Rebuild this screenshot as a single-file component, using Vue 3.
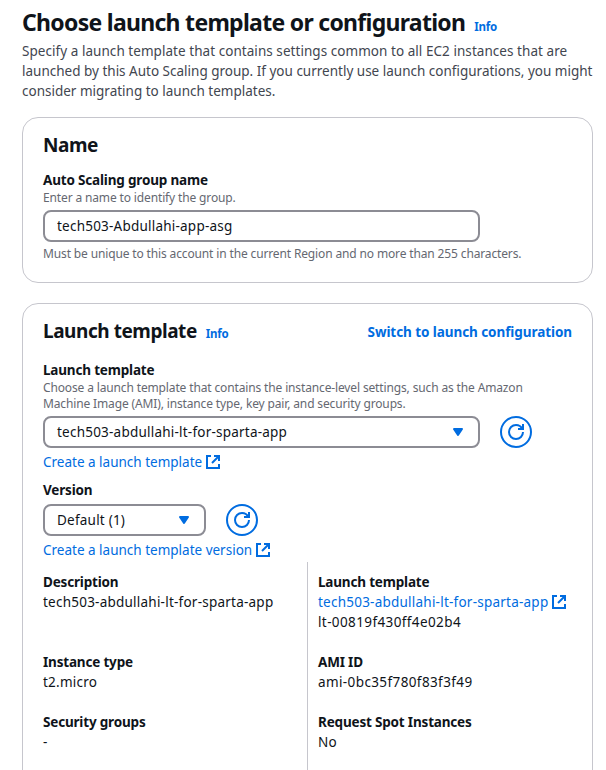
<script setup>
import { ref, h } from 'vue'

const groupName = ref('tech503-Abdullahi-app-asg')

const ExternalIcon = () =>
  h('svg', { width: 16, height: 16, viewBox: '0 0 16 16', fill: 'none', stroke: 'currentColor', 'stroke-width': 2 }, [
    h('path', { d: 'M6 2H2v12h12v-4' }),
    h('path', { d: 'M9 2h5v5' }),
    h('path', { d: 'M7 9l7-7' }),
  ])

const RefreshIcon = () =>
  h('svg', { width: 16, height: 16, viewBox: '0 0 16 16', fill: 'none', stroke: 'currentColor', 'stroke-width': 2 }, [
    h('path', { d: 'M15 8c0 3.900-3.100 7-7 7s-7-3.100-7-7 3.100-7 7-7c2.800 0 5.200 1.600 6.300 4' }),
    h('path', { d: 'M10 5h5V0' }),
  ])

const details = [
  [
    { label: 'Description', value: 'tech503-abdullahi-lt-for-sparta-app' },
    { label: 'Instance type', value: 't2.micro' },
    { label: 'Security groups', value: '-' },
  ],
  [
    { label: 'Launch template', link: 'tech503-abdullahi-lt-for-sparta-app', value: 'lt-00819f430ff4e02b4', id: true },
    { label: 'AMI ID', value: 'ami-0bc35f780f83f3f49', id: true },
    { label: 'Request Spot Instances', value: 'No' },
  ],
]
</script>

<template>
  <main class="page">
    <header class="intro">
      <div class="heading">
        <h1>Choose launch template or configuration</h1>
        <a class="info">Info</a>
      </div>
      <p>
        <span class="loose">Specify a launch template that contains settings common to all EC2 instances that are</span><br />
        launched by this Auto Scaling group. If you currently use launch configurations, you might<br />
        consider migrating to launch templates.
      </p>
    </header>

    <section class="card">
      <h2>Name</h2>
      <div class="field">
        <div class="label">Auto Scaling group name</div>
        <div class="hint">Enter a name to identify the group.</div>
        <input v-model="groupName" class="control wide" type="text" />
        <div class="hint">Must be unique to this account in the current Region and no more than 255 characters.</div>
      </div>
    </section>

    <section class="card tall">
      <div class="card-head">
        <div class="heading">
          <h2>Launch template</h2>
          <a class="info">Info</a>
        </div>
        <a class="switch">Switch to launch configuration</a>
      </div>
      <div class="field">
        <div class="label">Launch template</div>
        <div class="hint">
          Choose a launch template that contains the instance-level settings, such as the Amazon<br />
          Machine Image (AMI), instance type, key pair, and security groups.
        </div>
        <div class="row">
          <div class="control wide select">
            <span>tech503-abdullahi-lt-for-sparta-app</span>
            <svg width="12" height="9" viewBox="0 0 12 9"><path d="M2 1h8L6 7Z" fill="#006ce0" stroke="#006ce0" stroke-width="2" stroke-linejoin="round" /></svg>
          </div>
          <button class="refresh" type="button"><RefreshIcon /></button>
        </div>
        <a class="link"><span>Create a launch template</span><ExternalIcon /></a>
      </div>
      <div class="field second">
        <div class="label">Version</div>
        <div class="row">
          <div class="control narrow select">
            <span>Default (1)</span>
            <svg width="12" height="9" viewBox="0 0 12 9"><path d="M2 1h8L6 7Z" fill="#006ce0" stroke="#006ce0" stroke-width="2" stroke-linejoin="round" /></svg>
          </div>
          <button class="refresh" type="button"><RefreshIcon /></button>
        </div>
        <a class="link"><span>Create a launch template version</span><ExternalIcon /></a>
      </div>

      <div class="details">
        <div v-for="(col, c) in details" :key="c" class="col">
          <div v-for="item in col" :key="item.label">
            <div class="label">{{ item.label }}</div>
            <a v-if="item.link" class="link resource"><span>{{ item.link }}</span><ExternalIcon /></a>
            <div class="value" :class="{ id: item.id }">{{ item.value }}</div>
          </div>
        </div>
      </div>
    </section>
  </main>
</template>

<style>
body {
  margin: 0;
  background: #fff;
}
</style>

<style scoped>
.page {
  box-sizing: border-box;
  width: 606px;
  height: 770px;
  overflow: hidden;
  padding: 7px 13px 0 22px;
  display: flex;
  flex-direction: column;
  font: 13.5px/20px 'Noto Sans', sans-serif;
  color: #0f141a;
  white-space: nowrap;
}
h1,
h2,
p {
  margin: 0;
}
svg {
  display: block;
  flex: none;
}
.heading {
  display: flex;
  align-items: baseline;
}
h1 {
  font-size: 23px;
  line-height: 30px;
  font-weight: 700;
  letter-spacing: -0.71px;
}
h2 {
  font-size: 19px;
  line-height: 24px;
  font-weight: 700;
  letter-spacing: -0.45px;
}
.info {
  margin-left: 9px;
  font-size: 11.5px;
  line-height: 16px;
  font-weight: 700;
  letter-spacing: -0.2px;
  color: #006ce0;
}
.intro p {
  margin-top: 4px;
  color: #424650;
}
.loose {
  letter-spacing: 0.05px;
}
.card {
  box-sizing: border-box;
  flex: none;
  margin-top: 16px;
  height: 166px;
  padding: 15px 20px 0;
  border: 1px solid #c6c6cd;
  border-radius: 16px;
}
.card.tall {
  margin-top: 20px;
  height: 520px;
}
.card-head {
  display: flex;
  align-items: center;
  justify-content: space-between;
}
.switch {
  padding-top: 2px;
  font-weight: 700;
  letter-spacing: -0.07px;
  color: #006ce0;
}
.field {
  margin-top: 13px;
}
.card-head + .field {
  margin-top: 17px;
}
.label {
  font-weight: 700;
  letter-spacing: -0.18px;
}
.hint {
  font-size: 12px;
  line-height: 16px;
  letter-spacing: -0.14px;
  color: #656871;
}
.control {
  display: flex;
  box-sizing: border-box;
  height: 32px;
  margin: 4px 0;
  padding: 0 12px;
  border: 2px solid #8c8c94;
  border-radius: 8px;
  background: #fff;
  color: #0f141a;
  font: 13.5px/20px 'Noto Sans', sans-serif;
  letter-spacing: 0.22px;
  outline: none;
}
.wide {
  width: 437px;
}
.narrow {
  width: 163px;
}
.select {
  align-items: center;
  justify-content: space-between;
  padding-right: 14px;
}
.row {
  display: flex;
  align-items: center;
  gap: 20px;
}
.refresh {
  box-sizing: border-box;
  width: 32px;
  height: 32px;
  padding: 0;
  display: flex;
  align-items: center;
  justify-content: center;
  border: 2px solid #006ce0;
  border-radius: 50%;
  background: #fff;
  color: #006ce0;
}
.link {
  display: flex;
  align-items: center;
  gap: 3px;
  height: 20px;
  color: #006ce0;
}
.link.resource,
.value {
  letter-spacing: 0.23px;
}
.value.id {
  letter-spacing: 0.39px;
}
.field.second {
  margin-top: 8px;
}
.details {
  display: grid;
  grid-template-columns: 264px 1fr;
  margin-top: 2px;
  height: 230px;
}
.col {
  display: grid;
  grid-template-rows: 60px 40px 40px;
  align-content: start;
  gap: 20px;
  padding-top: 10px;
}
.col + .col {
  border-left: 1px solid #c6c6cd;
  padding-left: 10px;
}
</style>
